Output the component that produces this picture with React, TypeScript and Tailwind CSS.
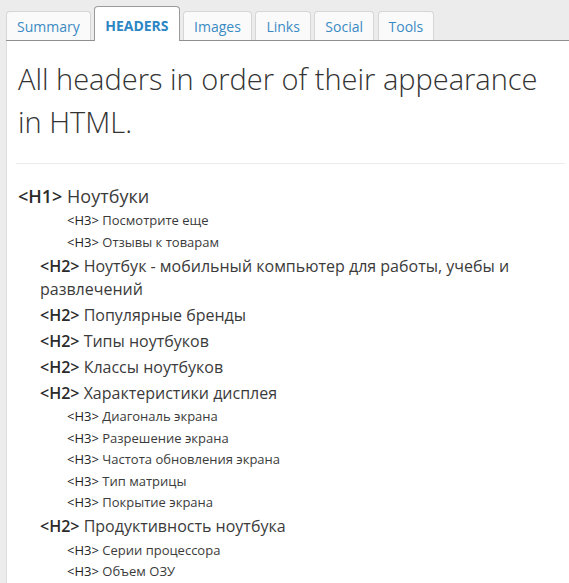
import React from 'react';

type Item = { level: 1 | 2 | 3; text: string };

const tabs = ['Summary', 'HEADERS', 'Images', 'Links', 'Social', 'Tools'];

const items: Item[] = [
  { level: 1, text: 'Ноутбуки' },
  { level: 3, text: 'Посмотрите еще' },
  { level: 3, text: 'Отзывы к товарам' },
  { level: 2, text: 'Ноутбук - мобильный компьютер для работы, учебы и развлечений' },
  { level: 2, text: 'Популярные бренды' },
  { level: 2, text: 'Типы ноутбуков' },
  { level: 2, text: 'Классы ноутбуков' },
  { level: 2, text: 'Характеристики дисплея' },
  { level: 3, text: 'Диагональ экрана' },
  { level: 3, text: 'Разрешение экрана' },
  { level: 3, text: 'Частота обновления экрана' },
  { level: 3, text: 'Тип матрицы' },
  { level: 3, text: 'Покрытие экрана' },
  { level: 2, text: 'Продуктивность ноутбука' },
  { level: 3, text: 'Серии процессора' },
  { level: 3, text: 'Объем ОЗУ' },
];

const HeaderRow = ({ item }: { item: Item }) => {
  if (item.level === 1) {
    return (
      <div className="text-[18px] leading-[28px] pl-[2px]">
        <span className="font-semibold text-[#2b2b2b]">&lt;H1&gt;</span> {item.text}
      </div>
    );
  }
  if (item.level === 2) {
    return (
      <div className="text-[16px] leading-[23px] py-[1.5px] pl-[24px]">
        <span className="font-semibold text-[#2b2b2b]">&lt;H2&gt;</span> {item.text}
      </div>
    );
  }
  return (
    <div className="text-[13px] leading-[21.5px] pl-[51px]">
      <span className="text-[#222]">&lt;H3&gt;</span> {item.text}
    </div>
  );
};

export default function App() {
  return (
    <div
      className="min-h-screen bg-[#ececec] pl-[6px] text-[#3b3b3b]"
      style={{ fontFamily: '"Open Sans", "Noto Sans", sans-serif' }}
    >
      {/* Tabs */}
      <div className="flex items-end h-[41px] border-b border-[#8f8f8f]">
        {tabs.map((t) => {
          const active = t === 'HEADERS';
          return (
            <div
              key={t}
              className={
                active
                  ? 'h-[35px] -mb-px mr-[3.5px] px-[10px] pt-[9px] bg-white border border-b-0 border-[#9a9a9a] rounded-t-[4px] text-[14px] font-bold text-[#2d86c4] leading-[19px]'
                  : 'h-[29px] mr-[3.5px] px-[10px] pt-[5px] bg-[#fafafa] border border-b-0 border-[#d6d6d6] rounded-t-[4px] text-[14px] text-[#3a8ac4] leading-[19px]'
              }
            >
              {t}
            </div>
          );
        })}
      </div>

      {/* Panel */}
      <div className="bg-white border-l border-[#dddddd] pl-[9px] pr-[4px] pt-[16px] pb-[40px]">
        <h1 className="text-[29px] font-light leading-[43px] text-[#333] pl-[2px]">
          All headers in order of their appearance in HTML.
        </h1>
        <div className="mt-[20px] mb-[18px] border-t border-[#ebebeb]" />
        <div>
          {items.map((it, i) => (
            <HeaderRow key={i} item={it} />
          ))}
        </div>
      </div>
    </div>
  );
}
